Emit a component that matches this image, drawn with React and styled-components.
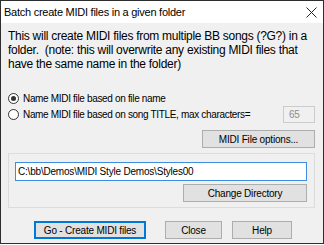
import React from "react";
import styled, { createGlobalStyle } from "styled-components";

const GlobalStyle = createGlobalStyle`
  body {
    margin: 0;
    background: #ffffff;
    font-family: "Liberation Sans", Arial, sans-serif;
  }
`;

const Window = styled.div`
  width: 324px;
  height: 244px;
  box-sizing: border-box;
  border: 1px solid #2e2e2e;
  background: #f0f0f0;
  display: flex;
  flex-direction: column;
`;

const TitleBar = styled.div`
  height: 22px;
  background: #ffffff;
  display: flex;
  align-items: center;
  justify-content: space-between;
  padding: 0 6px 0 3px;
  font-size: 11px;
  letter-spacing: -0.25px;
  color: #000;
`;

const CloseX = styled.svg`
  width: 11px;
  height: 11px;
`;

const Body = styled.div`
  flex: 1;
  display: flex;
  flex-direction: column;
  padding: 6px 8px 0 7px;
`;

const Description = styled.p`
  margin: 0;
  font-size: 12px;
  line-height: 14px;
  letter-spacing: -0.28px;
  white-space: nowrap;
  color: #000;
`;

const RadioRow = styled.label`
  height: 16px;
  display: flex;
  align-items: center;
  gap: 4px;
  font-size: 10px;
  letter-spacing: -0.33px;
  margin-top: ${(p) => p.$top}px;
`;

const RadioCircle = styled.span`
  width: 11px;
  height: 11px;
  box-sizing: border-box;
  border: 1px solid #333;
  border-radius: 50%;
  background: #fff;
  display: flex;
  align-items: center;
  justify-content: center;

  &::after {
    content: "";
    width: 5px;
    height: 5px;
    border-radius: 50%;
    background: ${(p) => (p.$checked ? "#333" : "transparent")};
  }
`;

const CountBox = styled.div`
  margin-left: auto;
  width: 32px;
  height: 17px;
  box-sizing: border-box;
  border: 1px solid #cccccc;
  background: #f0f0f0;
  color: #8d8d8d;
  font-size: 10px;
  display: flex;
  align-items: center;
  padding-left: 5px;
`;

const RightRow = styled.div`
  display: flex;
  justify-content: flex-end;
  margin-top: ${(p) => p.$top}px;
`;

const Button = styled.div`
  width: ${(p) => p.$w}px;
  height: 18px;
  margin-left: ${(p) => p.$ml || 0}px;
  box-sizing: border-box;
  border: 1px solid ${(p) => (p.$default ? "#0078d7" : "#adadad")};
  box-shadow: ${(p) => (p.$default ? "inset 0 0 0 1px #0078d7" : "none")};
  background: #e1e1e1;
  display: flex;
  align-items: center;
  justify-content: center;
  font-size: 10px;
  letter-spacing: -0.2px;
  color: #000;
  white-space: nowrap;
`;

const GroupBox = styled.div`
  margin-top: 5px;
  border: 1px solid #dcdcdc;
  padding: 8px 7px 5px 6px;
`;

const PathInput = styled.div`
  height: 19px;
  box-sizing: border-box;
  border: 1px solid #3d8ee0;
  background: #fff;
  font-size: 10px;
  letter-spacing: -0.2px;
  display: flex;
  align-items: center;
  padding-left: 2px;
`;

const ButtonRow = styled.div`
  display: flex;
  margin-top: 13px;
  padding-left: 26px;
`;

export default function App() {
  return (
    <>
      <GlobalStyle />
      <Window>
        <TitleBar>
          <span>Batch create MIDI files in a given folder</span>
          <CloseX viewBox="0 0 11 11">
            <path d="M0.5 0.5 L10.5 10.5 M10.5 0.5 L0.5 10.5" stroke="#222" strokeWidth="1" />
          </CloseX>
        </TitleBar>
        <Body>
          <Description>
            This will create MIDI files from multiple BB songs (?G?) in a
            <br />
            folder.&nbsp; (note: this will overwrite any existing MIDI files that
            <br />
            have the same name in the folder)
          </Description>
          <RadioRow $top={19}>
            <RadioCircle $checked />
            Name MIDI file based on file name
          </RadioRow>
          <RadioRow $top={0}>
            <RadioCircle />
            Name MIDI file based on song TITLE, max characters=
            <CountBox>65</CountBox>
          </RadioRow>
          <RightRow $top={8}>
            <Button $w={113}>MIDI File options...</Button>
          </RightRow>
          <GroupBox>
            <PathInput>C:\bb\Demos\MIDI Style Demos\Styles00</PathInput>
            <RightRow $top={3}>
              <Button $w={124}>Change Directory</Button>
            </RightRow>
          </GroupBox>
          <ButtonRow>
            <Button $w={112} $default>
              Go - Create MIDI files
            </Button>
            <Button $w={57} $ml={19}>
              Close
            </Button>
            <Button $w={60} $ml={10}>
              Help
            </Button>
          </ButtonRow>
        </Body>
      </Window>
    </>
  );
}
